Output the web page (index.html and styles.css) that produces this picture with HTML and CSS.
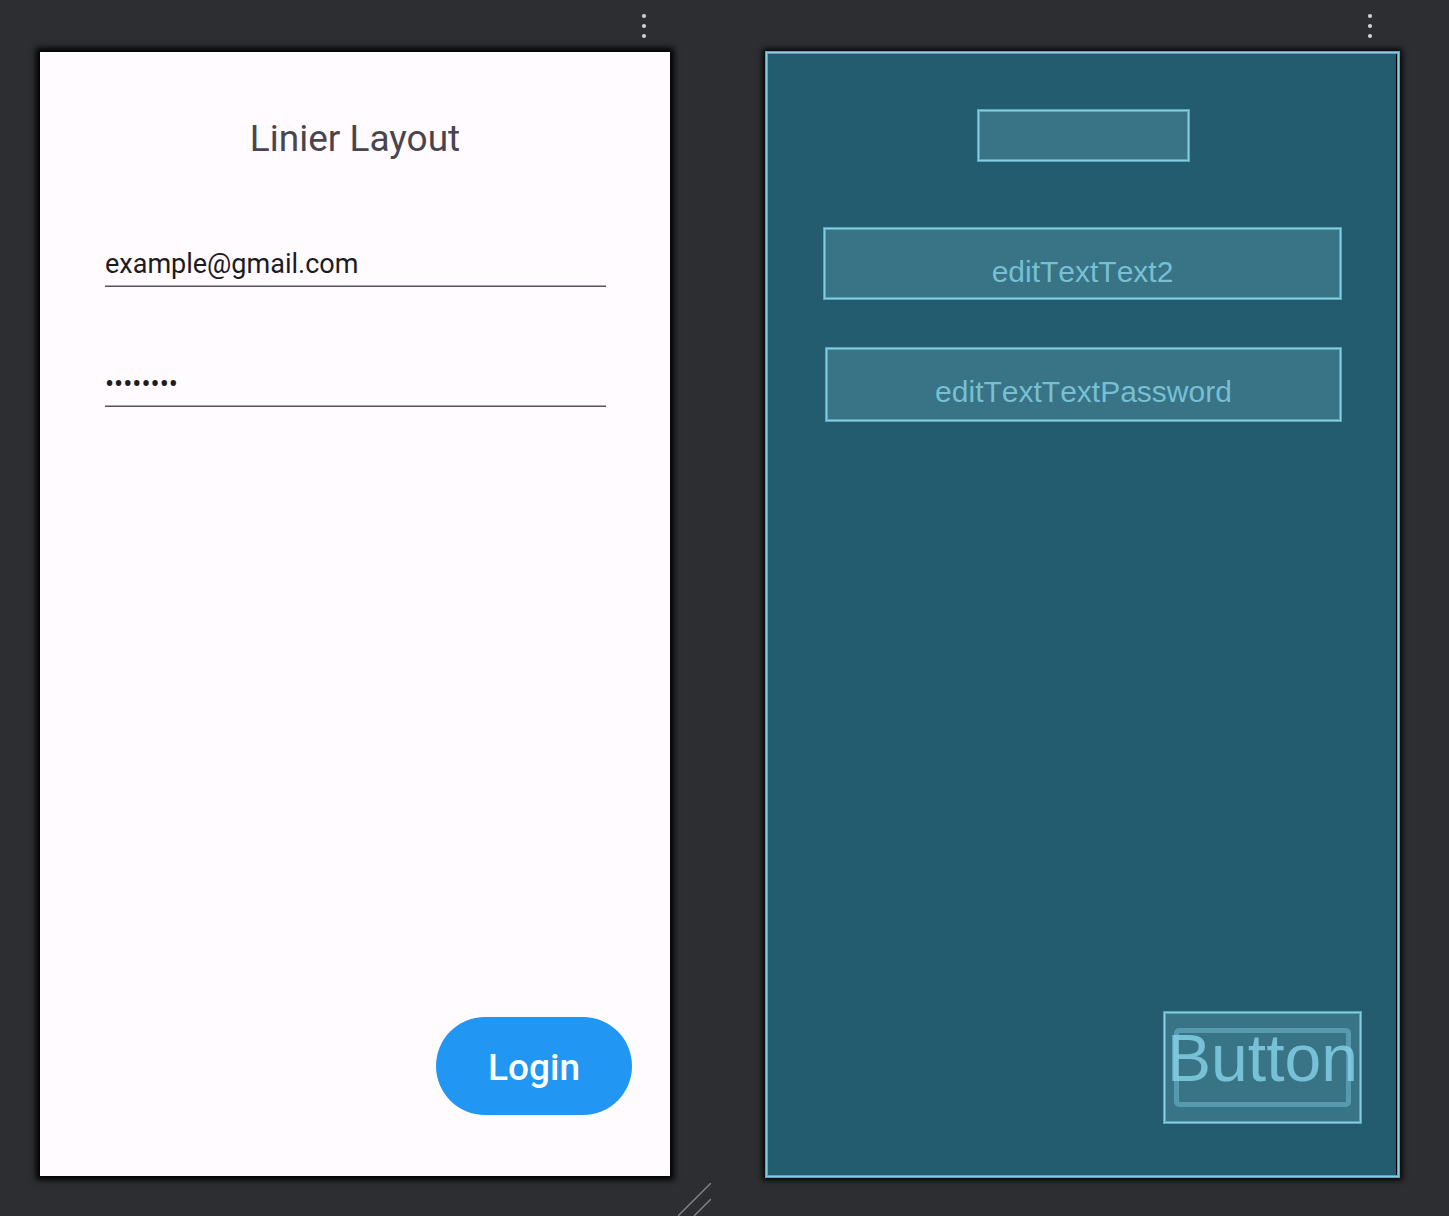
FILE: index.html
```html
<!DOCTYPE html>
<html lang="en">
<head>
  <meta charset="utf-8">
  <meta name="viewport" content="width=device-width, initial-scale=1">
  <title>Linier Layout</title>
  <link rel="stylesheet" href="styles.css">
</head>
<body>
  <main class="surfaces">
    <section class="pane pane-design" aria-label="Design">
      <header class="pane-bar">
        <button class="menu" type="button" aria-label="Design options">
          <svg width="6" height="26" viewBox="0 0 6 26" fill="#ced0d6"><circle cx="3" cy="3" r="2.1"/><circle cx="3" cy="13" r="2.1"/><circle cx="3" cy="23" r="2.1"/></svg>
        </button>
      </header>
      <form class="screen">
        <h1 class="title">Linier Layout</h1>
        <input class="field" type="email" value="example@gmail.com" aria-label="Email">
        <input class="field" type="password" value="password" aria-label="Password">
        <button class="login" type="button">Login</button>
      </form>
      <svg class="grip" width="33" height="33" viewBox="0 0 33 33" stroke="#85868a" stroke-width="1.4" aria-hidden="true"><path d="M0 33L33 0M16 33L33 16"/></svg>
    </section>
    <section class="pane pane-blueprint" aria-label="Blueprint">
      <header class="pane-bar">
        <button class="menu" type="button" aria-label="Blueprint options">
          <svg width="6" height="26" viewBox="0 0 6 26" fill="#ced0d6"><circle cx="3" cy="3" r="2.1"/><circle cx="3" cy="13" r="2.1"/><circle cx="3" cy="23" r="2.1"/></svg>
        </button>
      </header>
      <div class="blueprint outline">
        <div class="part part-title outline"></div>
        <div class="part part-email outline">editTextText2</div>
        <div class="part part-password outline">editTextTextPassword</div>
        <div class="part part-button outline"><div class="part-shape"><span>Button</span></div></div>
      </div>
    </section>
  </main>
</body>
</html>
```
FILE: styles.css
```css
* { box-sizing: border-box; }

body {
  margin: 0;
  background: #2d2e32;
  font-family: Roboto, "Liberation Sans", sans-serif;
}

.surfaces {
  display: grid;
  grid-template-columns: 711fr 738fr;
  min-height: 100vh;
}

.pane {
  position: relative;
  display: flex;
  flex-direction: column;
}

.pane-design { padding: 0 41px 40px 40px; }
.pane-blueprint { padding: 0 49px 38px 54px; }

.pane-bar {
  display: flex;
  justify-content: flex-end;
  height: 52px;
  padding: 13px 23px 0 0;
}

.pane-blueprint .pane-bar {
  height: 51px;
  padding-right: 27px;
}

.menu {
  display: block;
  height: 26px;
  padding: 0;
  border: 0;
  background: none;
}

.menu svg { display: block; }

.screen {
  flex: 1;
  display: flex;
  flex-direction: column;
  padding: 65px 38px 61px 65px;
  background: #fffbff;
  box-shadow: 0 0 6px 4px #000;
}

.title {
  margin: 0 27px 67px 0;
  color: #49454f;
  font-size: 37px;
  font-weight: 400;
  line-height: 44px;
  text-align: center;
}

.field {
  height: 59px;
  margin: 0 26px 61px 0;
  padding: 14px 0 0;
  border: 0;
  border-bottom: 1px solid #57535c;
  border-radius: 0;
  background: none;
  box-shadow: inset 0 -1px 0 0 #aaa6ad;
  color: #1c1b1f;
  font: 400 27px/32px Roboto, "Liberation Sans", sans-serif;
  outline: 0;
}

.login {
  align-self: flex-end;
  width: 196px;
  height: 98px;
  margin-top: auto;
  padding: 4px 0 0;
  border: 0;
  border-radius: 49px;
  background: #2196f3;
  color: #fff;
  font: 500 37px/44px Roboto, "Liberation Sans", sans-serif;
}

.grip {
  position: absolute;
  right: 0;
  bottom: 0;
}

/* Three-pixel line with a brighter core */
.outline {
  border: 1px solid #5fa5ba;
  box-shadow: inset 0 0 0 1px #84cee3, inset 0 0 0 2px #5fa5ba;
}

.blueprint {
  flex: 1;
  display: flex;
  flex-direction: column;
  padding: 57px 57px 53px;
  background: #235c6f;
  box-shadow: inset 0 0 0 1px #84cee3, inset 0 0 0 2px #5fa5ba, inset -3px 0 0 0 #000, 0 0 6px 2px #000;
}

.part {
  display: flex;
  align-items: center;
  justify-content: center;
  background: #387386;
  color: rgba(132, 206, 227, 0.85);
  font-family: "Liberation Sans", Arial, sans-serif;
  font-size: 30px;
  font-kerning: none;
  line-height: 34px;
}

.part-title {
  align-self: center;
  width: 213px;
  height: 53px;
  margin: 0 0 65px 2px;
}

.part-email {
  height: 73px;
  padding-top: 16px;
  margin-bottom: 47px;
}

.part-password {
  height: 75px;
  padding-top: 14px;
  margin-left: 2px;
}

.part-button {
  align-self: flex-end;
  width: 199px;
  height: 113px;
  margin: auto -20px 0 0;
}

.part-shape {
  display: flex;
  align-items: center;
  justify-content: center;
  width: 177px;
  height: 79px;
  padding-bottom: 19px;
  border: 5px solid #5799ae;
  border-radius: 5px;
  font-size: 66px;
  line-height: 72px;
}
```
